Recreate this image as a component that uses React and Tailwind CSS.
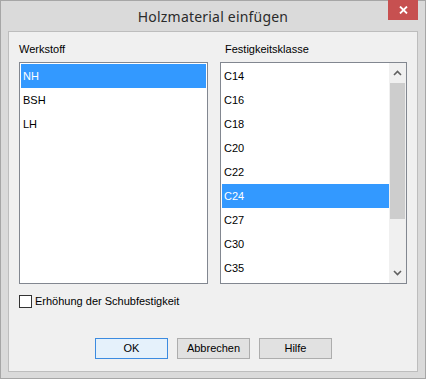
import React from 'react';

const werkstoffe = ['NH', 'BSH', 'LH'];
const klassen = ['C14', 'C16', 'C18', 'C20', 'C22', 'C24', 'C27', 'C30', 'C35'];

const font = { fontFamily: '"Liberation Sans", Arial, sans-serif' };

const ListRow = ({ label, selected }) => (
  <div
    className={`h-[24px] flex items-center pl-[2px] text-[11px] leading-none ${
      selected ? 'bg-[#3399ff] text-white' : 'text-black'
    }`}
  >
    {label}
  </div>
);

const DialogButton = ({ children, primary }) => (
  <button
    className={`w-[73px] h-[21px] text-[11px] text-black border ${
      primary ? 'border-[#3c8be0] bg-[#e5f1fb]' : 'border-[#adadad] bg-[#e1e1e1]'
    }`}
  >
    {children}
  </button>
);

export default function App() {
  return (
    <div
      style={font}
      className="w-[426px] h-[379px] border border-[#a6a6a6] bg-[#dadada] px-[7px] pb-[6px] flex flex-col"
    >
      {/* Title bar */}
      <div className="relative h-[30px] flex items-center justify-center shrink-0">
        <span
          className="text-[14px] text-[#2b2b2b] tracking-[0.2px]"
          style={{ fontFamily: '"Noto Sans", "Liberation Sans", sans-serif' }}
        >
          Holzmaterial einfügen
        </span>
        <div className="absolute top-[-1px] right-0 w-[30px] h-[20px] bg-[#c75050] flex items-center justify-center">
          <svg width="9" height="8" viewBox="0 0 9 8">
            <path d="M1 0.5 L8 7.5 M8 0.5 L1 7.5" stroke="white" strokeWidth="1.8" />
          </svg>
        </div>
      </div>

      {/* Client area */}
      <div className="flex-1 bg-[#f0f0f0] border border-[#bdbdbd] flex flex-col px-[10px]">
        <div className="flex gap-[12px] mt-[8px]">
          {/* Werkstoff */}
          <div className="w-[189px] flex flex-col">
            <div className="h-[16px] text-[11px] leading-[18px] text-black">Werkstoff</div>
            <div className="mt-[6px] h-[222px] border border-[#828790] bg-white p-[1px]">
              {werkstoffe.map((w) => (
                <ListRow key={w} label={w} selected={w === 'NH'} />
              ))}
            </div>
          </div>

          {/* Festigkeitsklasse */}
          <div className="w-[187px] flex flex-col">
            <div className="h-[16px] text-[11px] leading-[18px] text-black pl-[5px]">Festigkeitsklasse</div>
            <div className="mt-[6px] h-[222px] border border-[#828790] bg-white flex">
              <div className="flex-1 pl-[1px] pt-[1px] overflow-hidden">
                {klassen.map((k) => (
                  <ListRow key={k} label={k} selected={k === 'C24'} />
                ))}
              </div>
              <div className="w-[17px] bg-[#f0f0f0] flex flex-col items-center">
                <div className="h-[20px] w-full flex items-center justify-center">
                  <svg width="9" height="6" viewBox="0 0 9 6">
                    <path d="M1 5 L4.5 1.5 L8 5" stroke="#606060" strokeWidth="1.6" fill="none" />
                  </svg>
                </div>
                <div className="w-[15px] h-[136px] bg-[#cdcdcd]" />
                <div className="flex-1" />
                <div className="h-[20px] w-full flex items-center justify-center">
                  <svg width="9" height="6" viewBox="0 0 9 6">
                    <path d="M1 1 L4.5 4.5 L8 1" stroke="#606060" strokeWidth="1.6" fill="none" />
                  </svg>
                </div>
              </div>
            </div>
          </div>
        </div>

        {/* Checkbox */}
        <div className="flex items-center gap-[3px] mt-[9px]">
          <div className="w-[13px] h-[13px] border border-[#333333] bg-white" />
          <span className="text-[11px] leading-[16px] text-black">Erhöhung der Schubfestigkeit</span>
        </div>

        {/* Buttons */}
        <div className="flex gap-[9px] mt-[29px] pl-[76px]">
          <DialogButton primary>OK</DialogButton>
          <DialogButton>Abbrechen</DialogButton>
          <DialogButton>Hilfe</DialogButton>
        </div>
      </div>
    </div>
  );
}
